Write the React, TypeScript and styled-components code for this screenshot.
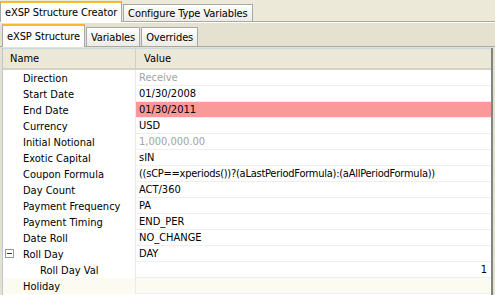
import React from "react";
import styled, { createGlobalStyle, css } from "styled-components";

const Global = createGlobalStyle`
  html, body { margin: 0; padding: 0; }
  body {
    width: 495px; height: 295px; overflow: hidden;
    background: #ECE9D8;
    font-family: "DejaVu Sans Condensed", "Liberation Sans", sans-serif;
    font-size: 11px; color: #000;
  }
`;

const Window = styled.div`
  width: 495px; height: 295px; overflow: hidden;
  display: flex; flex-direction: column;
  background: #ECE9D8;
`;

const TabStrip = styled.div<{ $inner?: boolean }>`
  display: flex; align-items: flex-end;
  height: ${p => (p.$inner ? 23 : 21)}px;
  padding-left: ${p => (p.$inner ? 2 : 0)}px;
  border-bottom: 1px solid #A7A9A4;
  background: ${p => (p.$inner ? "#E4E1D1" : "#ECE9D8")};
  flex-shrink: 0;
`;

const Tab = styled.div<{ $active?: boolean }>`
  box-sizing: border-box;
  display: flex; align-items: center;
  padding: 0 4px 0 4px;
  border: 1px solid #A4AAAC;
  border-bottom: none;
  margin-right: 1px;
  white-space: nowrap;
  letter-spacing: -0.1px;
  ${p => p.$active
    ? css`
        background: #FCFCFB;
        border-top: 2px solid #F9B834;
        margin-bottom: -1px;
        height: 100%;
      `
    : css`
        height: calc(100% - 4px);
        background: linear-gradient(#FEFEFC, #ECEBE5);
      `}
`;

const Panel = styled.div`
  flex: 1; display: flex; flex-direction: column;
  background: #E4E1D1;
  border-top: 1px solid #fff;
`;

const Grid = styled.div`
  flex: 1;
  margin: 1px 0 0 2px;
  width: 488px;
  background: #fff;
  border-left: 1px solid #B9C9D6;
  border-right: 2px solid #7F8583;
  display: flex; flex-direction: column;
`;

const Header = styled.div`
  display: grid; grid-template-columns: 133px 1fr;
  height: 22px; box-sizing: border-box;
  background: #EBE8D7;
  border-top: 1px solid #C9D6E0;
  border-bottom: 2px solid #D6D2C2;
`;

const HeaderCell = styled.div<{ $first?: boolean }>`
  display: flex; align-items: center;
  padding-left: ${p => (p.$first ? 7 : 8)}px;
  ${p => p.$first && css`border-right: 1px solid #D3D0C0;`}
`;

const Row = styled.div<{ $last?: boolean }>`
  display: grid; grid-template-columns: 133px 1fr;
  height: 16px;
  background: ${p => (p.$last ? "#FBFBF2" : "#fff")};
`;

const NameCell = styled.div<{ $indent: number }>`
  display: flex; align-items: center;
  padding-left: ${p => p.$indent}px;
  border-right: 1px solid #EAEAEA;
  position: relative;
  white-space: nowrap;
`;

const ValueCell = styled.div<{ $muted?: boolean; $alert?: boolean; $right?: boolean; $tight?: boolean }>`
  display: flex; align-items: center;
  justify-content: ${p => (p.$right ? "flex-end" : "flex-start")};
  padding: 0 ${p => (p.$right ? 4 : 0)}px 0 3px;
  border-bottom: 1px solid #EFEFEF;
  box-sizing: border-box;
  white-space: nowrap; overflow: hidden;
  letter-spacing: ${p => (p.$tight ? "-0.25px" : "normal")};
  color: ${p => (p.$muted ? "#A3A3A3" : "#000")};
  background: ${p => (p.$alert ? "#FA9A98" : "transparent")};
`;

const Expander = styled.span`
  position: absolute; left: 2px; top: 3px;
  width: 9px; height: 9px; box-sizing: border-box;
  border: 1px solid #8E9BA6; background: #fff;
  display: flex; align-items: center; justify-content: center;
  &::after { content: ""; width: 5px; height: 1px; background: #333; }
`;

type RowData = {
  name: string; value?: string; indent?: number;
  muted?: boolean; alert?: boolean; right?: boolean; expander?: boolean; tight?: boolean;
};

const rows: RowData[] = [
  { name: "Direction", value: "Receive", muted: true },
  { name: "Start Date", value: "01/30/2008" },
  { name: "End Date", value: "01/30/2011", alert: true },
  { name: "Currency", value: "USD" },
  { name: "Initial Notional", value: "1,000,000.00", muted: true },
  { name: "Exotic Capital", value: "sIN" },
  { name: "Coupon Formula", value: "((sCP==xperiods())?(aLastPeriodFormula):(aAllPeriodFormula))", tight: true },
  { name: "Day Count", value: "ACT/360" },
  { name: "Payment Frequency", value: "PA" },
  { name: "Payment Timing", value: "END_PER" },
  { name: "Date Roll", value: "NO_CHANGE" },
  { name: "Roll Day", value: "DAY", expander: true },
  { name: "Roll Day Val", value: "1", indent: 37, right: true },
  { name: "Holiday", value: "" },
];

export default function App() {
  return (
    <>
      <Global />
      <Window>
        <TabStrip>
          <Tab $active>eXSP Structure Creator</Tab>
          <Tab>Configure Type Variables</Tab>
        </TabStrip>
        <Panel>
          <TabStrip $inner>
            <Tab $active>eXSP Structure</Tab>
            <Tab>Variables</Tab>
            <Tab>Overrides</Tab>
          </TabStrip>
          <Grid>
            <Header>
              <HeaderCell $first>Name</HeaderCell>
              <HeaderCell>Value</HeaderCell>
            </Header>
            {rows.map((r, i) => (
              <Row key={r.name} $last={i === rows.length - 1}>
                <NameCell $indent={r.indent ?? 20}>
                  {r.expander && <Expander />}
                  {r.name}
                </NameCell>
                <ValueCell $muted={r.muted} $alert={r.alert} $right={r.right} $tight={r.tight}>
                  {r.value}
                </ValueCell>
              </Row>
            ))}
          </Grid>
        </Panel>
      </Window>
    </>
  );
}
